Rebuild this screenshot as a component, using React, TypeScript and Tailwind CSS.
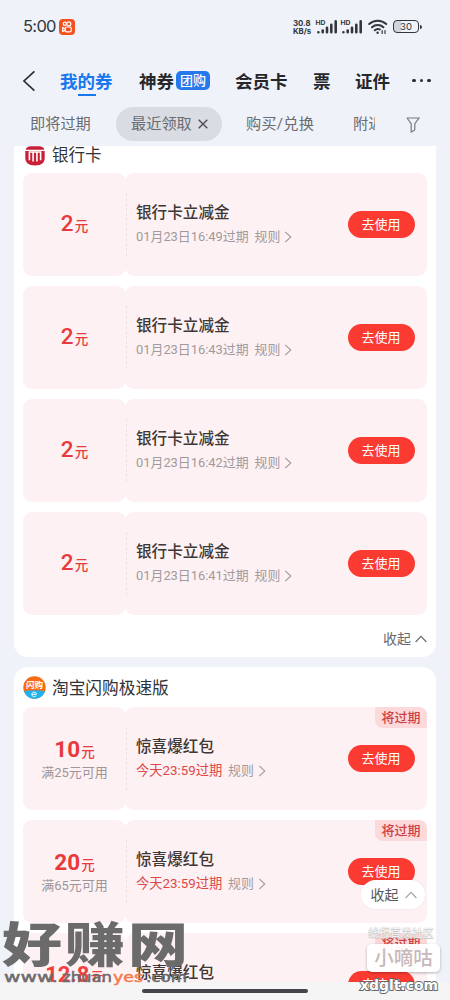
import { clsx } from "clsx"

type Coupon = {
  amount: string
  limit?: string
  title: string
  expire: string
  urgent?: boolean
}

const bankCoupons: Coupon[] = [
  { amount: "2", title: "银行卡立减金", expire: "01月23日16:49过期" },
  { amount: "2", title: "银行卡立减金", expire: "01月23日16:43过期" },
  { amount: "2", title: "银行卡立减金", expire: "01月23日16:42过期" },
  { amount: "2", title: "银行卡立减金", expire: "01月23日16:41过期" },
]

const taobaoCoupons: Coupon[] = [
  { amount: "10", limit: "满25元可用", title: "惊喜爆红包", expire: "今天23:59过期", urgent: true },
  { amount: "20", limit: "满65元可用", title: "惊喜爆红包", expire: "今天23:59过期", urgent: true },
]

function Signal() {
  return (
    <svg width="22" height="16" viewBox="0 0 22 16" className="shrink-0 overflow-visible">
      <text x="-.5" y="6.2" fontFamily="Inter" fontSize="6.5" fontWeight="700" fill="#33363b" textLength="10" lengthAdjust="spacingAndGlyphs">
        HD
      </text>
      <g stroke="#33363b" strokeWidth="2.6" strokeLinecap="round">
        <path d="M2.4 13.2v.1M6.7 11.6v1.7M11 8.8v4.5M15.3 5.8v7.5M19.7 2.4v10.9" />
      </g>
    </svg>
  )
}

function StatusBar() {
  return (
    <div className="flex h-[53px] items-center pl-[23px] text-[#33363b]">
      <span className="w-[33px] whitespace-nowrap font-[Inter] text-[16.5px] leading-none tracking-[-0.7px]">5:00</span>
      <svg width="16" height="16" viewBox="0 0 16 16" className="ml-[3px]">
        <rect width="16" height="16" rx="4" fill="#f4511e" />
        <g fill="none" stroke="#fff" strokeWidth="1.2">
          <circle cx="5.8" cy="4.7" r="1.6" />
          <circle cx="9.8" cy="4.9" r="2" />
          <rect x="6.2" y="8" width="6" height="4.8" rx="1.4" />
          <path d="M6.2 9.8 3.7 8.6v3.8l2.5-1" />
        </g>
      </svg>
      <div className="ml-[218px] w-[21px] font-[Inter] text-[7.8px] font-bold leading-[8px]">
        <div className="whitespace-nowrap">30.8</div>
        <div className="whitespace-nowrap">KB/s</div>
      </div>
      <div className="ml-[2px] flex gap-[3px]">
        <Signal />
        <Signal />
      </div>
      <svg width="20" height="16" viewBox="0 0 20 16" className="ml-[5px]" fill="none" stroke="#33363b" strokeWidth="2" strokeLinecap="round">
        <path d="M1.2 5a12.6 12.6 0 0 1 17 0M4 8.2a8.4 8.4 0 0 1 11.4 0M6.8 11.2a4.6 4.6 0 0 1 5-.8" />
        <path d="M9.6 13.6v.2" strokeWidth="2.4" />
        <path d="M14.2 11.6v2.8M17 11.6v2.8" strokeWidth="1.2" />
      </svg>
      <div className="ml-[5px] flex h-[13px] w-[26px] items-center justify-center rounded-[4px] border-[1.5px] border-[#33363b] bg-gradient-to-r from-[#d2d5da] from-30% to-transparent to-30% font-[Inter] text-[9.5px]">
        <span className="pt-[1px]">30</span>
      </div>
      <div className="ml-[1px] h-[4px] w-[1.5px] rounded-r bg-[#33363b]" />
    </div>
  )
}

function TabBar() {
  return (
    <div className="flex h-[55px] items-center text-[17.5px] font-bold leading-[22px] text-[#25272b]">
      <svg width="14" height="22" viewBox="0 0 14 22" className="ml-[22px]" fill="none" stroke="#2c2e33" strokeWidth="1.7">
        <path d="M12.4 1.3 2 11l10.4 9.7" />
      </svg>
      <div className="relative ml-[24px] w-[79px] whitespace-nowrap pt-[3px] text-[#1877ee]">
        我的券
        <span className="absolute -bottom-[3px] left-[18px] h-[2px] w-[18px] bg-[#1877ee]" />
      </div>
      <div className="w-[37px] whitespace-nowrap pt-[3px]">神券</div>
      <div className="flex h-[19px] w-[34px] items-center justify-center whitespace-nowrap rounded-[5px] bg-[#2679ed] pt-[1px] text-[13px] font-medium text-white">
        团购
      </div>
      <div className="ml-[25px] w-[78px] whitespace-nowrap pt-[3px]">会员卡</div>
      <div className="w-[42px] pt-[3px]">票</div>
      <div className="w-[57px] whitespace-nowrap pt-[3px]">证件</div>
      <div className="flex gap-[4px]">
        <i className="size-[3.5px] rounded-full bg-[#2c2e33]" />
        <i className="size-[3.5px] rounded-full bg-[#2c2e33]" />
        <i className="size-[3.5px] rounded-full bg-[#2c2e33]" />
      </div>
    </div>
  )
}

function Filters() {
  return (
    <div className="flex h-[38px] items-start text-[15.2px] leading-[33px] text-[#696c72]">
      <span className="ml-[30px] w-[86px] whitespace-nowrap">即将过期</span>
      <div className="-mt-[1px] flex h-[34px] w-[106px] items-center whitespace-nowrap rounded-full bg-[#d9dce2] pl-[15px]">
        <span>最近领取</span>
        <svg width="10" height="10" viewBox="0 0 10 10" className="ml-[6px]" stroke="#4b4d52" strokeWidth="1.4">
          <path d="m.7.7 8.6 8.6M9.3.7.7 9.3" />
        </svg>
      </div>
      <span className="ml-[24px] w-[107px] whitespace-nowrap tracking-[0.2px]">购买/兑换</span>
      <span className="w-[22px] overflow-hidden whitespace-nowrap">附近</span>
      <svg width="14" height="16" viewBox="0 0 14 16" className="ml-[31px] mt-[9px]" fill="none" stroke="#76797f" strokeWidth="1.2">
        <path d="M1 1h12L8.8 6.6V13M1 1l4.2 5.6V15l3.6-2" />
      </svg>
    </div>
  )
}

function Chevron({ up = false, className }: { up?: boolean; className?: string }) {
  return up ? (
    <svg width="12" height="8" viewBox="0 0 12 8" className={className} fill="none" stroke="currentColor" strokeWidth="1.1">
      <path d="M.6 7 6 1.3 11.4 7" />
    </svg>
  ) : (
    <svg width="8" height="12" viewBox="0 0 8 12" className={className} fill="none" stroke="currentColor" strokeWidth="1.1">
      <path d="M1.2.8 6.8 6l-5.6 5.2" />
    </svg>
  )
}

function CouponCard({ amount, limit, title, expire, urgent }: Coupon) {
  return (
    <div className="relative flex h-[103px] shrink-0">
      <div className={clsx("flex w-[103px] flex-col items-center rounded-[9px] bg-[#fef1f3]", limit ? "pt-[31px]" : "pt-[39px]")}>
        <div className="flex items-baseline whitespace-nowrap font-medium leading-[22px] text-[#e83a3c]">
          <span className={clsx("text-[22.5px]", limit && "font-bold")}>{amount}</span>
          <span className="ml-[1px] text-[13.5px]">元</span>
        </div>
        {limit && <div className="mt-[1px] whitespace-nowrap text-[13px] leading-[18px] text-[#9d9598]">{limit}</div>}
      </div>
      <div className="relative z-10 my-[20px] w-0 border-l border-dashed border-[#f3dfe2]" />
      <div className="-ml-[2px] flex flex-1 items-center rounded-[9px] bg-[#fef1f3] pl-[11px] pr-[12.5px]">
        <div className="flex-1 pb-[2px]">
          <div className="whitespace-nowrap text-[15.6px] font-medium leading-[22px] text-[#3d3835]">{title}</div>
          <div className="mt-[4px] flex items-center whitespace-nowrap text-[12.9px] leading-[18px] text-[#a19a9c]">
            <span className={clsx(urgent ? "w-[92px] text-[13.3px] text-[#dc4747]" : "w-[118.5px]")}>{expire}</span>
            规则
            <Chevron className="ml-[4px]" />
          </div>
        </div>
        <button className="h-[27px] w-[67px] whitespace-nowrap rounded-full bg-[#fb3a31] pt-[1px] text-[13px] leading-[26px] text-white">
          去使用
        </button>
      </div>
      {urgent && (
        <div className="absolute right-0 top-0 h-[21px] w-[52px] whitespace-nowrap rounded-bl-[8px] rounded-tr-[8px] bg-[#fcd9da] text-center text-[13px] font-medium leading-[22px] text-[#cf4145]">
          将过期
        </div>
      )}
    </div>
  )
}

// Last coupon of the list, only its upper half is above the fold
function CutCoupon() {
  return (
    <div className="relative flex h-[49px] shrink-0 overflow-hidden">
      <div className="flex w-[103px] justify-center rounded-t-[9px] bg-[#fef1f3] pt-[31px]">
        <div className="flex items-baseline whitespace-nowrap text-[22px] font-bold leading-[22px] text-[#f0403f]">
          12.8<span className="ml-[1px] text-[13.5px] font-medium">元</span>
        </div>
      </div>
      <div className="flex flex-1 items-start justify-between rounded-t-[9px] bg-[#fef1f3] pl-[10px] pr-[12.5px]">
        <div className="whitespace-nowrap pt-[28.5px] text-[15.6px] font-medium leading-[22px] text-[#3d3835]">惊喜爆红包</div>
        <button className="mt-[38px] h-[27px] w-[67px] whitespace-nowrap rounded-full bg-[#fb3a31] text-[13px] leading-[26px] text-white">
          去使用
        </button>
      </div>
      <div className="absolute right-0 top-0 h-[21px] w-[52px] whitespace-nowrap rounded-bl-[8px] rounded-tr-[8px] bg-[#fcd9da] text-center text-[13px] font-medium leading-[22px] text-[#cf4145]">
        将过期
      </div>
    </div>
  )
}

function BankIcon() {
  return (
    <svg width="20" height="20" viewBox="0 0 20 20" className="ml-[2px] shrink-0">
      <path d="M6 .2h8c3 0 5 1.4 5.3 3.5H.7C1 1.6 3 .2 6 .2Z" fill="#c91f37" />
      <path d="M.3 5h19.4v7c0 4.5-3 7.5-9.7 7.5S.3 16.5.3 12Z" fill="#c91f37" />
      <path d="M4.4 6v8.2M8.1 6v9.4M11.9 6v9.4M15.6 6v8.2M3.6 6h12.8" stroke="#fff" strokeWidth="1.6" fill="none" />
    </svg>
  )
}

function TaobaoIcon() {
  return (
    <svg width="23" height="23" viewBox="0 0 23 23" className="shrink-0">
      <defs>
        <clipPath id="disc">
          <circle cx="11.5" cy="11.5" r="11.2" />
        </clipPath>
      </defs>
      <g clipPath="url(#disc)">
        <rect width="23" height="23" fill="#f66b16" />
        <path d="M0 15.5Q11.5 13 23 15.5V23H0Z" fill="#20b1ee" />
      </g>
      <text x="3" y="11.5" fontSize="8.5" fontWeight="700" fill="#fff">
        闪购
      </text>
      <path d="M9 18.3h4.4c0-2.8-4.5-2.8-4.5 0 0 2.6 3 2.8 4.3 1.5" fill="none" stroke="#fff" strokeWidth="1" />
    </svg>
  )
}

function Watermarks() {
  return (
    <>
      <svg width="196" height="72" viewBox="0 0 196 72" className="absolute bottom-[12px] left-0">
        <g transform="translate(0 46) scale(1 .79)" fontSize="60" fontWeight="900" fill="#6c6b6b">
          <text x="2" y="0">好</text>
          <text x="65" y="0">赚</text>
          <text x="128" y="0">网</text>
        </g>
        <g fontFamily="DejaVu Sans" fontSize="14.5" fill="#6c6b6b" stroke="#6c6b6b" strokeWidth=".5">
          <text x="4" y="65.5" textLength="54" lengthAdjust="spacingAndGlyphs">www.</text>
          <text x="62" y="65.5" textLength="50" lengthAdjust="spacingAndGlyphs">zhuan</text>
          <text x="113" y="65.5" textLength="30" lengthAdjust="spacingAndGlyphs" fill="#f27a4f" stroke="#f27a4f">yes</text>
          <text x="146" y="65.5" textLength="41" lengthAdjust="spacingAndGlyphs">.com</text>
        </g>
      </svg>
      <div className="absolute bottom-[59px] right-[14px] h-[14px] w-[68px] whitespace-nowrap text-[11px] leading-[14px] text-white/90 [text-shadow:0_0_1px_#aaa,0_1px_1px_#bbb]">
        线报首发社区
      </div>
      <div className="absolute bottom-[28px] right-[10px] h-[28px] w-[73px] whitespace-nowrap rounded-[5px] bg-white/95 pt-[1px] text-center text-[19.5px] font-medium leading-[28px] text-[#c9b8bb] shadow-[0_1px_3px_rgba(0,0,0,0.3)]">
        小嘀咕
      </div>
      <svg width="84" height="24" viewBox="0 0 84 24" className="absolute bottom-[4px] right-[8px]">
        <text
          x="2"
          y="18"
          fontFamily="DejaVu Sans"
          fontSize="14"
          fontWeight="700"
          fill="#fff"
          stroke="#666"
          strokeWidth="1.8"
          paintOrder="stroke"
          textLength="78"
          lengthAdjust="spacingAndGlyphs"
        >
          xdglt.com
        </text>
      </svg>
    </>
  )
}

export default function App() {
  return (
    <div className="relative flex h-[1000px] w-[450px] flex-col overflow-hidden bg-[#eff2f9] font-[Roboto,'Noto_Sans_CJK_SC',sans-serif]">
      <header className="h-[146px] shrink-0">
        <StatusBar />
        <TabBar />
        <Filters />
      </header>

      <main className="flex h-[836px] shrink-0 flex-col gap-[10px] overflow-hidden px-[14px]">
        <section className="h-[511px] shrink-0 rounded-b-[14px] bg-white px-[9px]">
          <div className="flex h-[27px] items-start">
            <BankIcon />
            <h2 className="ml-[7px] whitespace-nowrap text-[16.5px] leading-[19px] text-[#303236]">银行卡</h2>
          </div>
          <div className="flex flex-col gap-[10px]">
            {bankCoupons.map((coupon) => (
              <CouponCard key={coupon.expire} {...coupon} />
            ))}
          </div>
          <div className="flex h-[47px] items-center justify-end whitespace-nowrap text-[14px] text-[#67696e]">
            <span className="pt-[2px]">收起</span>
            <Chevron up className="ml-[4px]" />
          </div>
        </section>

        <section className="shrink-0 rounded-t-[14px] bg-white px-[9px]">
          <div className="flex h-[40px] items-center">
            <TaobaoIcon />
            <h2 className="ml-[6px] whitespace-nowrap pt-[3px] text-[16.7px] leading-[24px] text-[#303236]">淘宝闪购极速版</h2>
          </div>
          <div className="flex flex-col gap-[10px]">
            {taobaoCoupons.map((coupon) => (
              <CouponCard key={coupon.amount} {...coupon} />
            ))}
            <CutCoupon />
          </div>
        </section>
      </main>

      <footer className="flex h-[18px] shrink-0 justify-center bg-[#f5f5f6] pt-[7px]">
        <div className="h-[4px] w-[166px] rounded-full bg-[#45464a]" />
      </footer>

      <div className="absolute bottom-[91px] right-[25px] flex h-[29px] w-[64px] items-center whitespace-nowrap rounded-full bg-white pl-[9.5px] text-[14px] text-[#55575c] shadow-[0_0_3px_rgba(0,0,0,0.06)]">
        <span className="pt-[1px]">收起</span>
        <Chevron up className="ml-[6px] text-[#a0a2a6]" />
      </div>

      <Watermarks />
    </div>
  )
}
